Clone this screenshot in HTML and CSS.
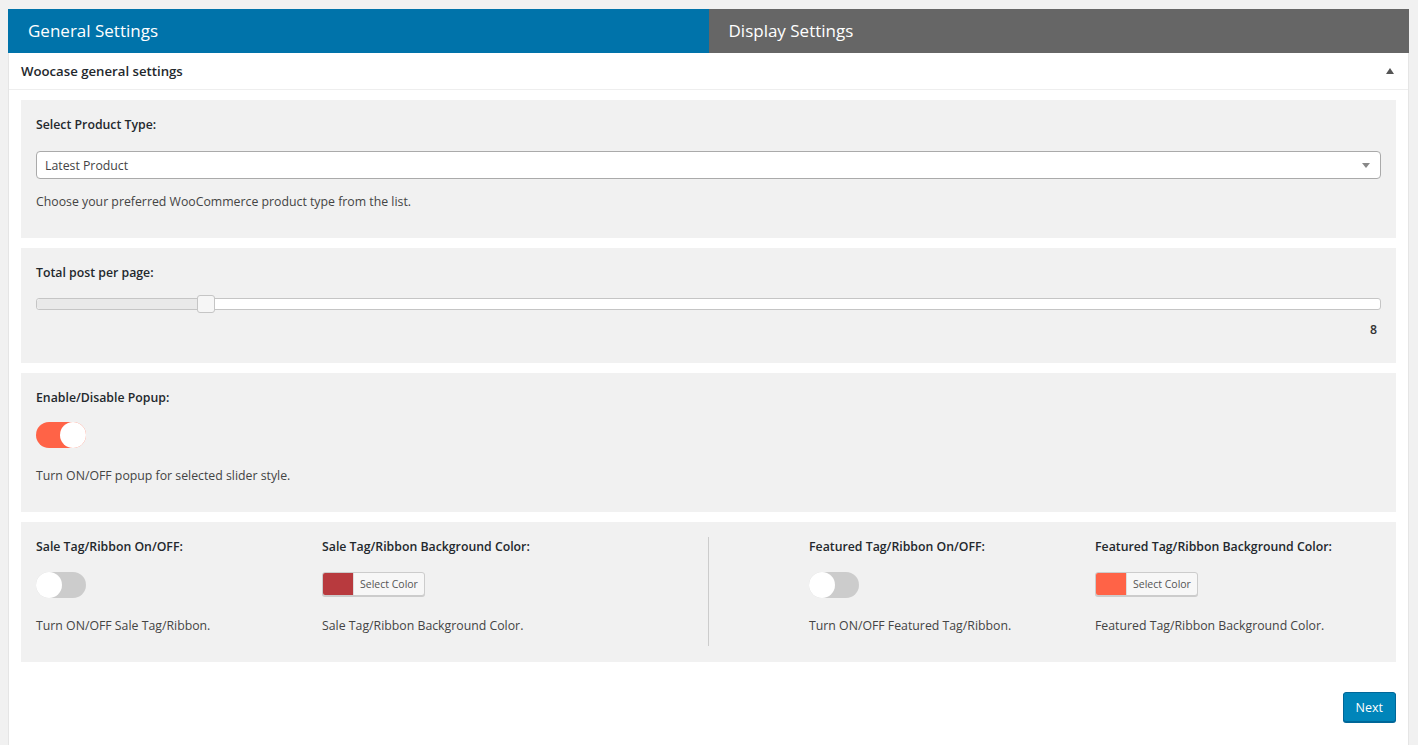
FILE: index.html
```html
<!DOCTYPE html>
<html>
<head>
<meta charset="utf-8">
<link rel="stylesheet" href="styles.css">
</head>
<body>
<div class="wrap">
  <div class="tabs">
    <div class="tab tab-active">General Settings</div>
    <div class="tab tab-inactive">Display Settings</div>
  </div>
  <div class="panel">
    <div class="panel-head">
      <span class="panel-title">Woocase general settings</span>
      <span class="caret-up"></span>
    </div>
    <div class="panel-body">
      <div class="field">
        <div class="label label-select">Select Product Type:</div>
        <div class="select">
          <span>Latest Product</span>
          <span class="select-arrow"></span>
        </div>
        <div class="desc desc-select">Choose your preferred WooCommerce product type from the list.</div>
      </div>

      <div class="field field-slider">
        <div class="label">Total post per page:</div>
        <div class="slider">
          <div class="slider-fill" style="width: 12.6%"></div>
          <div class="slider-handle" style="left: 12.6%"></div>
        </div>
        <div class="slider-value">8</div>
      </div>

      <div class="field">
        <div class="label label-tight">Enable/Disable Popup:</div>
        <div class="toggle toggle-on"><span class="knob"></span></div>
        <div class="desc desc-toggle">Turn ON/OFF popup for selected slider style.</div>
      </div>

      <div class="field field-cols">
        <div class="half half-left">
          <div class="col">
            <div class="label">Sale Tag/Ribbon On/OFF:</div>
            <div class="toggle"><span class="knob"></span></div>
            <div class="desc desc-toggle">Turn ON/OFF Sale Tag/Ribbon.</div>
          </div>
          <div class="col">
            <div class="label">Sale Tag/Ribbon Background Color:</div>
            <div class="color-pick"><span class="swatch swatch-sale"></span><span class="pick-text">Select Color</span></div>
            <div class="desc desc-color">Sale Tag/Ribbon Background Color.</div>
          </div>
        </div>
        <div class="half half-right">
          <div class="col">
            <div class="label">Featured Tag/Ribbon On/OFF:</div>
            <div class="toggle"><span class="knob"></span></div>
            <div class="desc desc-toggle">Turn ON/OFF Featured Tag/Ribbon.</div>
          </div>
          <div class="col">
            <div class="label">Featured Tag/Ribbon Background Color:</div>
            <div class="color-pick"><span class="swatch swatch-featured"></span><span class="pick-text">Select Color</span></div>
            <div class="desc desc-color">Featured Tag/Ribbon Background Color.</div>
          </div>
        </div>
      </div>

      <div class="actions">
        <button class="btn-next">Next</button>
      </div>
    </div>
  </div>
</div>
</body>
</html>
```

FILE: styles.css
```css
* { box-sizing: border-box; }
html, body { margin: 0; padding: 0; }
body {
  background: #f1f1f1;
  font-family: "Open Sans", "Noto Sans", sans-serif;
  font-size: 12.3px;
  color: #444;
  height: 745px;
  overflow: hidden;
}
.wrap {
  padding: 9px 0 0 8px;
  width: 1409px;
}
.tabs {
  display: flex;
  height: 44px;
}
.tab {
  flex: 1;
  color: #fff;
  font-size: 17px;
  line-height: 44px;
  padding-left: 20px;
}
.tab-active { background: #0073aa; }
.tab-inactive { background: #666; }

.panel {
  background: #fff;
  border-left: 1px solid #e5e5e5;
  border-right: 1px solid #e5e5e5;
  min-height: 700px;
}
.panel-head {
  height: 37px;
  border-bottom: 1px solid #eee;
  display: flex;
  align-items: center;
  justify-content: space-between;
  padding: 0 14px 0 12px;
}
.panel-title {
  font-weight: 600;
  color: #23282d;
  font-size: 13.2px;
}
.caret-up {
  width: 0;
  height: 0;
  border-left: 4px solid transparent;
  border-right: 4px solid transparent;
  border-bottom: 6px solid #555;
}
.panel-body {
  padding: 10px 12px 0 12px;
}
.field {
  background: #f1f1f1;
  padding: 15px 15px 26px;
  margin-bottom: 10px;
}
.label {
  font-weight: 600;
  color: #23282d;
  line-height: 20px;
  margin-bottom: 15px;
}
.label-select { margin-bottom: 16px; }
.label-tight { margin-bottom: 14px; }
.desc {
  line-height: 20px;
  color: #444;
}
.desc-select { margin-top: 13px; }
.desc-toggle { margin-top: 18px; }
.desc-color { margin-top: 20px; }

.select {
  height: 28px;
  background: #fff;
  border: 1px solid #aaa;
  border-radius: 4px;
  display: flex;
  align-items: center;
  justify-content: space-between;
  padding: 0 10px 0 8px;
  color: #444;
}
.select-arrow {
  width: 0;
  height: 0;
  border-left: 4px solid transparent;
  border-right: 4px solid transparent;
  border-top: 5px solid #888;
}

.field-slider { padding-bottom: 23px; }
.slider {
  position: relative;
  height: 12px;
  background: #fff;
  border: 1px solid #c5c5c5;
  border-radius: 3px;
}
.slider-fill {
  height: 100%;
  background: #e9e9e9;
  border-radius: 3px 0 0 3px;
}
.slider-handle {
  position: absolute;
  top: -4px;
  width: 18px;
  height: 18px;
  margin-left: -9px;
  background: #f6f6f6;
  border: 1px solid #c5c5c5;
  border-radius: 3px;
}
.slider-value {
  margin-top: 10px;
  line-height: 20px;
  text-align: right;
  padding-right: 4px;
  color: #333;
  font-weight: 600;
}

.toggle {
  width: 50px;
  height: 26px;
  border-radius: 13px;
  background: #ccc;
  display: flex;
  justify-content: flex-start;
}
.toggle-on {
  background: #ff6347;
  justify-content: flex-end;
}
.knob {
  width: 26px;
  height: 26px;
  border-radius: 50%;
  background: #fff;
}

.field-cols {
  display: flex;
  padding-bottom: 16px;
}
.half { display: flex; }
.half-left { width: 672px; }
.half-right {
  flex: 1;
  border-left: 1px solid #ccc;
  padding-left: 100px;
}
.col {
  width: 286px;
  padding-bottom: 10px;
}
.color-pick {
  display: inline-flex;
  height: 24px;
  border: 1px solid #ccc;
  border-radius: 3px;
  background: #f7f7f7;
  box-shadow: 0 1px 0 #ccc;
  overflow: hidden;
  vertical-align: top;
}
.swatch {
  width: 30px;
  height: 100%;
}
.swatch-sale { background: #b83a3e; }
.swatch-featured { background: #ff6347; }
.pick-text {
  font-size: 10.5px;
  line-height: 22px;
  padding: 0 6px;
  color: #555;
  border-left: 1px solid #ddd;
}

.actions {
  display: flex;
  justify-content: flex-end;
  padding-top: 20px;
}
.btn-next {
  font-family: inherit;
  font-size: 12.5px;
  height: 30px;
  padding: 0 12px;
  background: #0085ba;
  border: 1px solid #006799;
  border-radius: 3px;
  color: #fff;
  box-shadow: 0 1px 0 #006799;
}
```
